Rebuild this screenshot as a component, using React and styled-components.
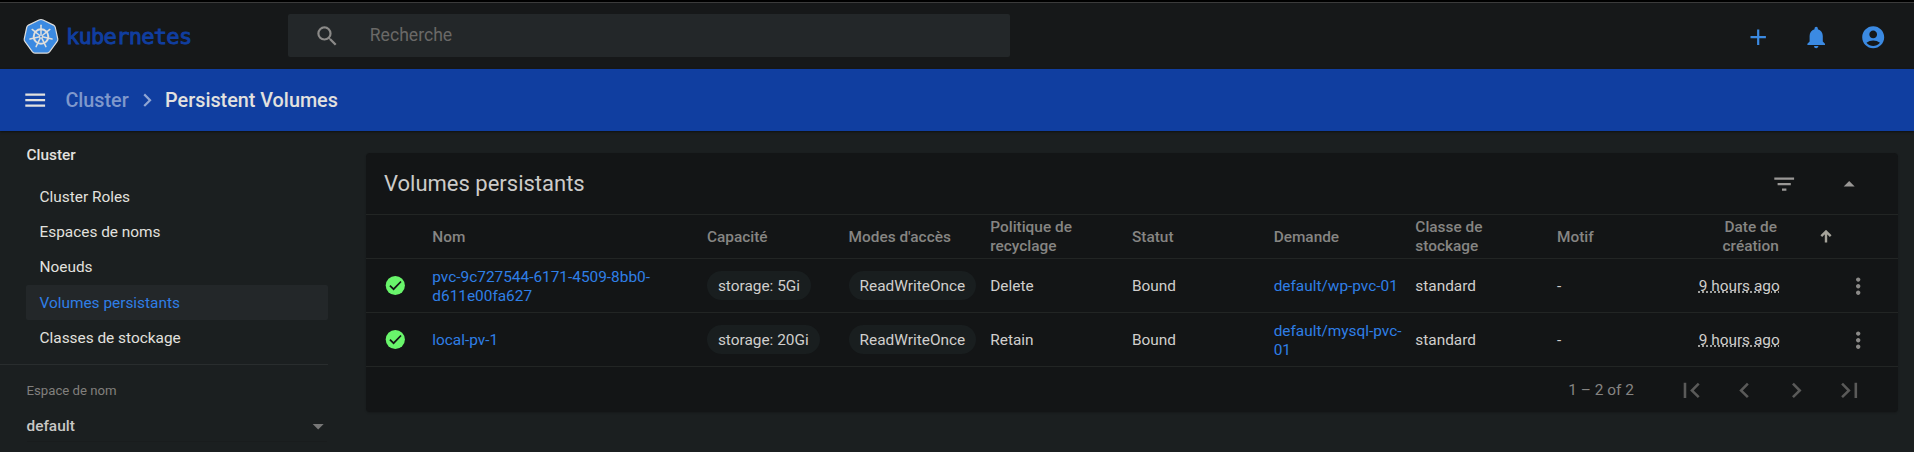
import React from "react";
import styled, { createGlobalStyle } from "styled-components";
import {
  MdSearch, MdAdd, MdNotifications, MdAccountCircle, MdMenu, MdChevronRight, MdChevronLeft,
  MdFilterList, MdArrowDropUp, MdArrowDropDown, MdMoreVert, MdFirstPage, MdLastPage,
} from "react-icons/md";

const c = {
  bg: "#1b1f20", bar: "#161819", field: "#232729", blue: "#103ea0", accent: "#3b8ae2", link: "#2f7fe6",
  card: "#131516", line: "#222524", text: "#d9d8d6", strong: "#e2e1df", muted: "#868583", chip: "#191e1f",
};

const GlobalStyle = createGlobalStyle`
  * { box-sizing: border-box; }
  body { margin: 0; background: ${c.bg}; color: ${c.text}; font: 15.4px/19px Roboto, sans-serif; overflow: hidden; }
  svg { display: block; flex: none; }
`;

const Page = styled.div`height: 452px; display: flex; flex-direction: column;`;
const TopBar = styled.header`
  height: 69px; flex: none; display: flex; align-items: center; padding: 0 27.5px 0 23.4px;
  background: ${c.bar}; border-top: 2px solid #000; box-shadow: inset 0 1px #3b3b3b;
`;
const Brand = styled.div`
  width: 264.6px; display: flex; align-items: center; gap: 6.6px; padding-top: 1px;
`;
const BrandName = styled.span`
  font: 22px/28px "DejaVu Sans Mono", monospace; letter-spacing: -0.7px; color: ${c.blue};
  -webkit-text-stroke: 0.9px ${c.blue}; padding-top: 2px;
`;
const SearchBox = styled.div`
  width: 722px; height: 43px; border-radius: 2px; background: ${c.field}; display: flex; align-items: center;
  gap: 29.4px; padding: 1px 0 0 26px; color: #8b8a88; font-size: 17.6px;
`;
const Placeholder = styled.span`color: #6a6967; padding-bottom: 1px;`;
const TopActions = styled.div`
  margin-left: auto; display: flex; gap: 31px; color: ${c.accent}; padding-top: 3px;
`;
const Crumbs = styled.nav`
  height: 62px; flex: none; display: flex; align-items: center; padding-left: 22px; padding-top: 1px; background: ${c.blue};
  color: ${c.strong}; font-size: 19.8px; line-height: 24px; font-weight: 500; box-shadow: 0 1px 2px rgba(0,0,0,.5);
`;
const Parent = styled.span`color: #7f98cc; margin-left: 17px;`;
const CrumbArrow = styled(MdChevronRight)`color: #8fa5d3; margin: 0 5px; padding-top: 0;`;
const Body = styled.div`flex: 1; display: flex; min-height: 0;`;

const Side = styled.aside`width: 328px; flex: none; padding: 14px 0 0;`;
const SideTitle = styled.div`height: 20px; padding-left: 26.5px; font-weight: 500; line-height: 20px; color: ${c.strong}; margin-bottom: 14px;`;
const SideItem = styled.div`
  height: 35.2px; margin-left: 26px; padding-left: 13.5px; line-height: 36px; border-radius: 2px;
  color: ${(p) => (p.$active ? c.link : c.strong)}; background: ${(p) => (p.$active ? c.field : "transparent")};
`;
const SideGroup = styled.div`padding-bottom: 9px; border-bottom: 1px solid #292d2e;`;
const FieldLabel = styled.div`margin: 16px 0 0 26.5px; font-size: 13.2px; color: #817f7d;`;
const Select = styled.div`
  margin: 9px 1px 0 26.5px; height: 33px; display: flex; justify-content: space-between; align-items: center;
  border-bottom: 1px solid #191c1d; font-weight: 500; color: #c9c8c6; padding-top: 3px;
  svg { color: #777; margin-right: -4px; margin-top: -1px; }
`;

const Main = styled.main`flex: 1; padding: 22px 16px 0 38px;`;
const Card = styled.section`height: 259px; background: ${c.card}; border-radius: 4px; box-shadow: 0 1px 2px rgba(0,0,0,.2);`;
const CardHead = styled.div`
  height: 62px; display: flex; align-items: center; padding: 1px 35.5px 0 18px; border-bottom: 1px solid ${c.line};
  color: #9a9896;
`;
const CardTitle = styled.h1`margin: 0 auto 0 0; font-size: 22px; line-height: 28px; font-weight: 400; color: #cccbc9;`;
const FilterIcon = styled(MdFilterList)`margin-right: 39.2px;`;
const Row = styled.div`
  display: grid; grid-template-columns: 47.8px 274.6px repeat(8, 141.7px) 1fr; align-items: center;
  padding-left: 18.5px; height: ${(p) => (p.$head ? 44 : 54)}px; border-bottom: 1px solid ${c.line};
  font-weight: ${(p) => (p.$head ? 500 : 400)}; color: ${(p) => (p.$head ? c.muted : "#d0cfcd")};
`;
const Link = styled.a`color: ${c.link}; display: block; padding-top: 2px; width: ${(p) => p.$w || 130}px;`;
const Cell = styled.div`padding-top: 2px;`;
const WrapCell = styled.div`width: 100px;`;
const Chip = styled.span`
  justify-self: start; height: 29px; line-height: 30px; padding: 0 11px; border-radius: 15px; background: ${c.chip}; white-space: nowrap;
`;
const DateHead = styled.div`
  display: flex; align-items: center; padding-left: 23.5px; text-align: center; gap: 40.5px;
  div { width: 57px; }
`;
const Ago = styled.span`text-decoration: underline dotted;`;
const More = styled(MdMoreVert)`margin-left: 4.6px; margin-top: 1px; color: #8b8a88;`;
const Pager = styled.div`
  height: 45px; display: flex; align-items: center; justify-content: flex-end; padding: 2px 33px 0 0; gap: 22px;
  color: #5a5a59;
`;
const Range = styled.span`color: #858482; margin-right: 20px;`;

const angles = [0, 1, 2, 3, 4, 5, 6].map((i) => (i * 360) / 7);

function Logo() {
  return (
    <svg width="36" height="37" viewBox="-18 -18.5 36 37">
      <path
        d="M0-17 Q1-17 2-16.5L12.5-11.4Q14-10.5 14.3-9L16.8 2.6Q17 4 16 5.2L8.7 15.2Q7.6 16.6 6 16.6H-6Q-7.6 16.6-8.7 15.2L-16 5.2Q-17 4-16.8 2.6L-14.3-9Q-14-10.5-12.5-11.4L-2-16.5Q-1-17 0-17Z"
        fill={c.accent} stroke="#dedddb" strokeWidth="1.2"
      />
      <g fill="none" stroke="#e0dfdc" strokeLinecap="round">
        <circle r="7.3" strokeWidth="2" />
        <circle r="1.6" strokeWidth="1.3" />
        {angles.map((a) => (
          <path key={a} d="M0-2.4V-11.3" strokeWidth="1.5" transform={`rotate(${a})`} />
        ))}
      </g>
    </svg>
  );
}

function StatusIcon() {
  return (
    <svg width="21" height="21" viewBox="0 0 21 21">
      <circle cx="10.3" cy="10.5" r="9.6" fill="#69f56b" />
      <path d="M4.9 10.6L8.6 14.2L16 6.5" fill="none" stroke={c.card} strokeWidth="1.7" />
    </svg>
  );
}

function SortArrow() {
  return (
    <svg width="12" height="13" viewBox="0 0 12 13">
      <path d="M6 12.6V2.2M1.3 6.2L6 1.5L10.7 6.2" fill="none" stroke="#a5a39a" strokeWidth="2.4" />
    </svg>
  );
}

const menu = ["Cluster Roles", "Espaces de noms", "Noeuds", "Volumes persistants", "Classes de stockage"];
const volumes = [
  { name: "pvc-9c727544-6171-4509-8bb0-d611e00fa627", cap: "5Gi", policy: "Delete", claim: "default/wp-pvc-01" },
  { name: "local-pv-1", cap: "20Gi", policy: "Retain", claim: "default/mysql-pvc-01" },
];

export default function App() {
  return (
    <Page>
      <GlobalStyle />
      <TopBar>
        <Brand><Logo /><BrandName>kubernetes</BrandName></Brand>
        <SearchBox><MdSearch size={26.4} /><Placeholder>Recherche</Placeholder></SearchBox>
        <TopActions><MdAdd size={26.4} /><MdNotifications size={26.4} /><MdAccountCircle size={26.4} /></TopActions>
      </TopBar>
      <Crumbs>
        <MdMenu size={26.4} /><Parent>Cluster</Parent><CrumbArrow size={26.4} /><span>Persistent Volumes</span>
      </Crumbs>
      <Body>
        <Side>
          <SideGroup>
            <SideTitle>Cluster</SideTitle>
            {menu.map((m) => <SideItem key={m} $active={m === "Volumes persistants"}>{m}</SideItem>)}
          </SideGroup>
          <FieldLabel>Espace de nom</FieldLabel>
          <Select><span>default</span><MdArrowDropDown size={26.4} /></Select>
        </Side>
        <Main>
          <Card>
            <CardHead>
              <CardTitle>Volumes persistants</CardTitle>
              <FilterIcon size={26.4} /><MdArrowDropUp size={26.4} />
            </CardHead>
            <Row $head>
              <span />
              <Cell>Nom</Cell><Cell>Capacité</Cell><Cell>Modes d'accès</Cell>
              <WrapCell>Politique de recyclage</WrapCell><Cell>Statut</Cell><Cell>Demande</Cell>
              <WrapCell>Classe de stockage</WrapCell><Cell>Motif</Cell>
              <DateHead><div>Date de création</div><SortArrow /></DateHead>
            </Row>
            {volumes.map((v) => (
              <Row key={v.name}>
                <StatusIcon />
                <Link $w={240}>{v.name}</Link>
                <Chip>storage: {v.cap}</Chip>
                <Chip>ReadWriteOnce</Chip>
                <Cell>{v.policy}</Cell>
                <Cell>Bound</Cell>
                <Link>{v.claim}</Link>
                <Cell>standard</Cell>
                <Cell>-</Cell>
                <Cell><Ago>9 hours ago</Ago></Cell>
                <More size={26.4} />
              </Row>
            ))}
            <Pager>
              <Range>1 – 2 of 2</Range>
              <MdFirstPage size={30.8} /><MdChevronLeft size={30.8} /><MdChevronRight size={30.8} /><MdLastPage size={30.8} />
            </Pager>
          </Card>
        </Main>
      </Body>
    </Page>
  );
}
